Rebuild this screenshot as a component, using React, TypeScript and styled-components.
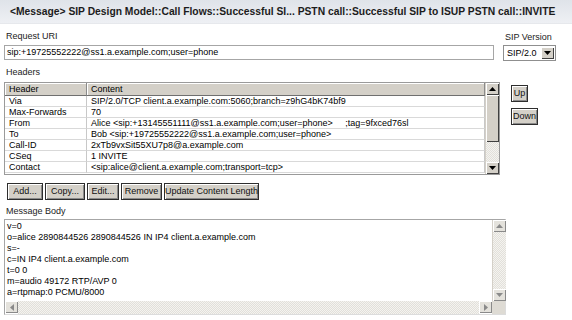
import React from "react";
import styled, { createGlobalStyle } from "styled-components";

const GlobalStyle = createGlobalStyle`
  body {
    margin: 0;
    background: #ffffff;
    font-family: "Liberation Sans", Arial, sans-serif;
    font-size: 9px;
    color: #000;
  }
`;

const Page = styled.div`
  width: 572px;
  height: 320px;
  overflow: hidden;
  background: #fff;
`;

const TitleBar = styled.div`
  height: 23px;
  display: flex;
  align-items: center;
  padding-left: 10px;
  background: linear-gradient(#dfe3e9, #eef0f4);
  border-bottom: 1px solid #e6e8ec;
  font-weight: bold;
  font-size: 10.3px;
  color: #1c1c1c;
  white-space: nowrap;
`;

const Body = styled.div`
  padding: 6px 4px 0 4px;
`;

const UriRow = styled.div`
  display: grid;
  grid-template-columns: 490px 1fr;
  column-gap: 9px;
  align-items: end;
`;

const Field = styled.div`
  display: flex;
  flex-direction: column;
`;

const Label = styled.div<{ $gap?: number; $top?: number }>`
  height: 12px;
  line-height: 12px;
  padding-left: 2px;
  margin-top: ${(p) => p.$top ?? 0}px;
  margin-bottom: ${(p) => p.$gap ?? 3}px;
  color: #222;
`;

const TextInput = styled.div`
  height: 13px;
  line-height: 13px;
  border: 1px solid #a6a6a6;
  padding-left: 2px;
  margin-bottom: 1px;
`;

const Select = styled.div`
  width: 53px;
  height: 16px;
  border: 1px solid #8f8f8f;
  display: flex;
  align-items: center;
  justify-content: space-between;
  padding: 0 1px 0 3px;
  box-sizing: border-box;
`;

const DropButton = styled.div`
  width: 13px;
  height: 12px;
  background: #d4d0c8;
  box-shadow: inset 1px 1px #fff, inset -1px -1px #404040;
  display: flex;
  align-items: center;
  justify-content: center;
`;

const HeadersRow = styled.div`
  display: flex;
  align-items: flex-start;
  gap: 11px;
`;

const TableFrame = styled.div`
  width: 496px;
  height: 93px;
  border: 1px solid #9a9a9a;
  display: flex;
  box-sizing: border-box;
`;

const Grid = styled.div`
  flex: 1;
  display: grid;
  grid-template-columns: 82px 1fr;
  grid-auto-rows: 11px;
  grid-template-rows: 13px;
`;

const HeadCell = styled.div`
  background: #d4d0c8;
  border-right: 1px solid #8a8a8a;
  border-bottom: 1px solid #6f6f6f;
  box-shadow: inset 1px 1px #fff;
  padding-left: 4px;
  line-height: 12px;
`;

const Cell = styled.div`
  border-right: 1px solid #c8c8c8;
  border-bottom: 1px solid #d9d9d9;
  padding-left: 4px;
  line-height: 10px;
  white-space: pre;
  overflow: hidden;
`;

const VScroll = styled.div`
  width: 13px;
  display: flex;
  flex-direction: column;
  border-left: 1px solid #d4d0c8;
`;

const ScrollBtn = styled.div<{ $faded?: boolean }>`
  width: 13px;
  height: 12px;
  flex: none;
  background: ${(p) => (p.$faded ? "#e4e2dc" : "#d4d0c8")};
  box-shadow: ${(p) =>
    p.$faded
      ? "inset 1px 1px #fff, inset -1px -1px #8a8a8a"
      : "inset 1px 1px #fff, inset -1px -1px #404040"};
  display: flex;
  align-items: center;
  justify-content: center;
`;

const Thumb = styled.div<{ $h: number }>`
  height: ${(p) => p.$h}px;
  flex: none;
  background: #d4d0c8;
  box-shadow: inset 1px 1px #fff, inset -1px -1px #404040;
`;

const Track = styled.div`
  flex: 1;
  background-color: #eceae6;
  background-image: repeating-conic-gradient(#f4f3f0 0 25%, #e2e0da 0 50%);
  background-size: 2px 2px;
`;

const SideButtons = styled.div`
  display: flex;
  flex-direction: column;
  align-items: flex-start;
  gap: 6px;
  padding-top: 3px;
`;

const WinButton = styled.div<{ $w?: number }>`
  height: 17px;
  line-height: 15px;
  ${(p) => (p.$w ? `width: ${p.$w}px; text-align: center;` : "padding: 0 3px;")}
  background: #d4d0c8;
  border: 1px solid #2e2e2e;
  box-shadow: inset 1px 1px #fff, inset -1px -1px #8a8a8a;
  box-sizing: border-box;
  white-space: nowrap;
  color: #111;
`;

const ActionRow = styled.div`
  display: flex;
  gap: 2px;
  padding: 8px 0 0 3px;
`;

const BodyFrame = styled.div`
  width: 502px;
  height: 96px;
  border: 1px solid #a6a6a6;
  border-right-color: #dcdcdc;
  border-bottom-color: #dcdcdc;
  box-sizing: border-box;
  display: grid;
  grid-template-columns: 1fr 13px;
  grid-template-rows: 1fr 13px;
`;

const BodyText = styled.div`
  padding: 1px 2px;
  line-height: 11px;
  white-space: pre;
  overflow: hidden;
`;

const HScroll = styled.div`
  display: flex;
`;

const Corner = styled.div`
  background: #dedbd4;
`;

const Arrow = ({ dir, color = "#000" }: { dir: "up" | "down" | "right" | "left"; color?: string }) => {
  const pts = {
    up: "0,4 7,4 3.5,0",
    down: "0,0 7,0 3.5,4",
    right: "0,0 0,7 4,3.5",
    left: "4,0 4,7 0,3.5",
  }[dir];
  const vertical = dir === "up" || dir === "down";
  return (
    <svg width={vertical ? 7 : 4} height={vertical ? 4 : 7} viewBox={vertical ? "0 0 7 4" : "0 0 4 7"}>
      <polygon points={pts} fill={color} />
    </svg>
  );
};

const headers: [string, string][] = [
  ["Via", "SIP/2.0/TCP client.a.example.com:5060;branch=z9hG4bK74bf9"],
  ["Max-Forwards", "70"],
  ["From", "Alice <sip:+13145551111@ss1.a.example.com;user=phone>     ;tag=9fxced76sl"],
  ["To", "Bob <sip:+19725552222@ss1.a.example.com;user=phone>"],
  ["Call-ID", "2xTb9vxSit55XU7p8@a.example.com"],
  ["CSeq", "1 INVITE"],
  ["Contact", "<sip:alice@client.a.example.com;transport=tcp>"],
];

const actions: [string, number][] = [
  ["Add...", 36],
  ["Copy...", 40],
  ["Edit...", 32],
  ["Remove", 41],
  ["Update Content Length", 95],
];

const sdp = [
  "v=0",
  "o=alice 2890844526 2890844526 IN IP4 client.a.example.com",
  "s=-",
  "c=IN IP4 client.a.example.com",
  "t=0 0",
  "m=audio 49172 RTP/AVP 0",
  "a=rtpmap:0 PCMU/8000",
].join("\n");

export default function App() {
  return (
    <Page>
      <GlobalStyle />
      <TitleBar>
        &lt;Message&gt; SIP Design Model::Call Flows::Successful SI... PSTN call::Successful SIP to ISUP PSTN call::INVITE
      </TitleBar>
      <Body>
        <UriRow>
          <Field>
            <Label>Request URI</Label>
            <TextInput>sip:+19725552222@ss1.a.example.com;user=phone</TextInput>
          </Field>
          <Field>
            <Label $gap={2}>SIP Version</Label>
            <Select>
              SIP/2.0
              <DropButton>
                <Arrow dir="down" />
              </DropButton>
            </Select>
          </Field>
        </UriRow>

        <Label $gap={4} $top={5}>Headers</Label>
        <HeadersRow>
          <TableFrame>
            <Grid>
              <HeadCell>Header</HeadCell>
              <HeadCell>Content</HeadCell>
              {headers.map(([name, value]) => (
                <React.Fragment key={name}>
                  <Cell>{name}</Cell>
                  <Cell>{value}</Cell>
                </React.Fragment>
              ))}
            </Grid>
            <VScroll>
              <ScrollBtn>
                <Arrow dir="up" />
              </ScrollBtn>
              <Thumb $h={47} />
              <Track />
              <ScrollBtn>
                <Arrow dir="down" />
              </ScrollBtn>
            </VScroll>
          </TableFrame>
          <SideButtons>
            <WinButton $w={17}>Up</WinButton>
            <WinButton $w={27}>Down</WinButton>
          </SideButtons>
        </HeadersRow>

        <ActionRow>
          {actions.map(([text, w]) => (
            <WinButton key={text} $w={w}>
              {text}
            </WinButton>
          ))}
        </ActionRow>

        <Label $gap={2} $top={5}>Message Body</Label>
        <BodyFrame>
          <BodyText>{sdp}</BodyText>
          <VScroll>
            <ScrollBtn $faded>
              <Arrow dir="up" color="#8a8a8a" />
            </ScrollBtn>
            <Track />
            <ScrollBtn $faded>
              <Arrow dir="down" color="#8a8a8a" />
            </ScrollBtn>
          </VScroll>
          <HScroll>
            <ScrollBtn $faded>
              <Arrow dir="left" color="#8a8a8a" />
            </ScrollBtn>
            <Track />
            <ScrollBtn $faded>
              <Arrow dir="right" color="#8a8a8a" />
            </ScrollBtn>
          </HScroll>
          <Corner />
        </BodyFrame>
      </Body>
    </Page>
  );
}
